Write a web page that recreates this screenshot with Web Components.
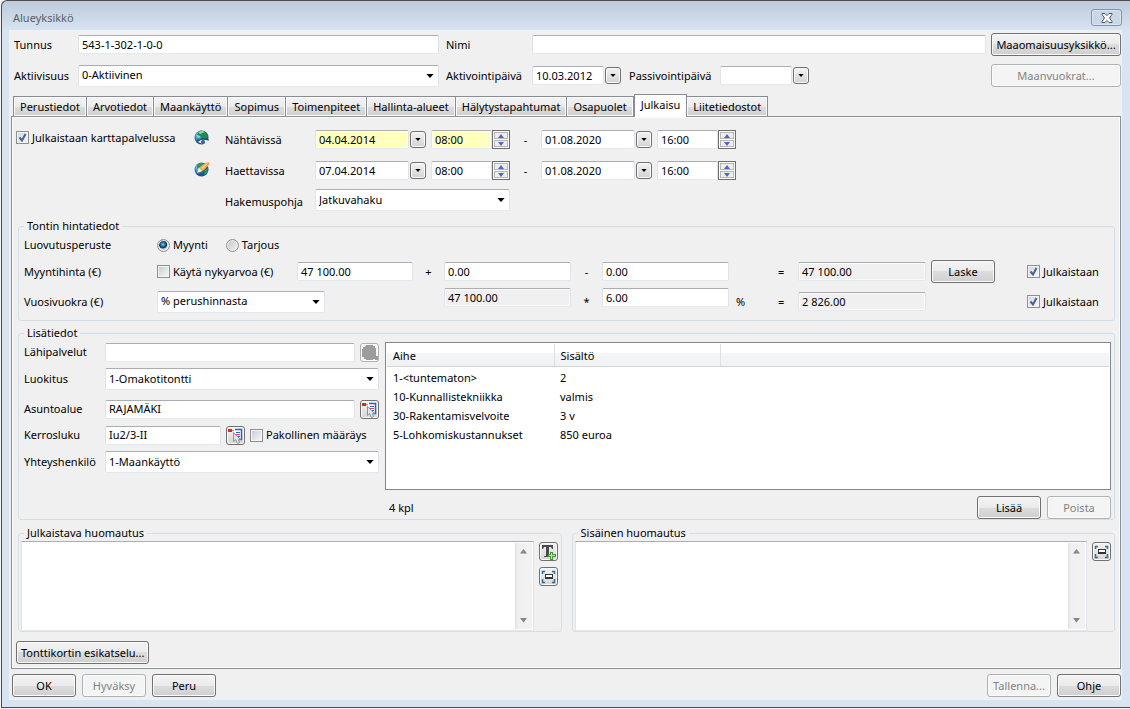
<!DOCTYPE html>
<html lang="fi">
<head>
<meta charset="utf-8">
<meta name="viewport" content="width=device-width, initial-scale=1">
<title>Alueyksikkö</title>
<style>
html, body { margin: 0; }
body {
  min-height: 100vh;
  display: flex;
  background: #f4f4f4;
  font: 11px/14px "Noto Sans", "Open Sans", sans-serif;
  color: #000;
}
app-window { flex: 1; }
</style>
</head>
<body>
<app-window heading="Alueyksikkö">
  <unit-header></unit-header>
  <unit-tabs selected="Julkaisu">
    <publish-times></publish-times>
    <price-info></price-info>
    <extra-info></extra-info>
    <unit-notes></unit-notes>
  </unit-tabs>
  <unit-footer></unit-footer>
</app-window>

<script>
const arrow = (c, w = 9, h = 5) => `url("data:image/svg+xml,%3Csvg xmlns='http://www.w3.org/2000/svg' width='${w}' height='${h}' viewBox='0 0 9 5'%3E%3Cpath d='M0 0h9L4.5 5z' fill='%23${c}'/%3E%3C/svg%3E")`;
const tick = `url("data:image/svg+xml,%3Csvg xmlns='http://www.w3.org/2000/svg' width='11' height='11'%3E%3Cpath d='M2.5 5.5l2.5 3L8.500 2' fill='none' stroke='%234b5f9b' stroke-width='2'/%3E%3C/svg%3E")`;

/* Styles for native controls, adopted by every component */
const base = `
*, *::before { box-sizing: border-box; }
:host { display: block; }
:host([hidden]) { display: none; }
input, select, button, textarea { font: inherit; color: inherit; margin: 0; border-radius: 2px; }
label, span { white-space: nowrap; }
input[type=text], textarea, select {
  border: 1px solid; border-color: #abadb3 #e2e3ea #e3e9ef #e2e3ea;
  background-color: #fff; min-width: 0; width: 100%; outline: 0;
}
input[type=text] { height: 19px; padding: 0 3px 1px; }
input[readonly] { background-color: #f0f0f0; box-shadow: inset 0 0 0 1px #fafafa; }
select {
  appearance: none; height: 22px; padding: 0 20px 1px 3px;
  background-image: ${arrow('000', 8, 4)}; background-repeat: no-repeat; background-position: right 4px center;
}
button {
  height: 23px; min-width: 64px; padding: 0 4px; border: 1px solid #707070; border-radius: 3px;
  background: linear-gradient(#f3f3f3, #ebebeb 50%, #dddddd 50%, #cfcfcf);
  box-shadow: inset 0 0 0 1px #fbfbfb; white-space: nowrap;
}
button:disabled { border-color: #adb2b5; background: #f4f4f4; color: #838383; }
input[type=checkbox], input[type=radio] {
  appearance: none; flex: none; width: 13px; height: 13px; border: 1px solid #8e8f8f; border-radius: 0;
  background: linear-gradient(135deg, #c9ced4, #f6f6f6) center / 9px 9px no-repeat #f4f4f4;
}
input[type=checkbox]:checked { background: ${tick} center no-repeat, linear-gradient(135deg, #d5d9de, #f6f6f6) center / 9px 9px no-repeat #f4f4f4; }
input[type=radio] { border-radius: 50%; background: linear-gradient(135deg, #bfc4c9, #f6f6f6) center / 100% no-repeat; box-shadow: inset 0 0 0 1px #f4f4f4; }
input[type=radio]:checked { background: radial-gradient(circle at 45% 40%, #7cd3f7 0, #1c6a97 25%, #0d2f4f 42%, #d0d5d9 50%, #e8eaec 100%); }
.check { display: inline-flex; align-items: center; gap: 3px; }
`;

function define(name, render) {
  customElements.define(name, class extends HTMLElement {
    constructor() {
      super();
      this.attachShadow({ mode: 'open' });
    }
    connectedCallback() {
      const t = document.createElement('template');
      t.innerHTML = `<style>${base}</style>` + render(this);
      this.shadowRoot.replaceChildren(t.content.cloneNode(true));
    }
  });
}
const attr = (el, n) => el.getAttribute(n) || '';

define('app-window', el => `
<style>
:host { display: flex; flex-direction: column; margin: 0 0 1px 1px; padding: 0 8px 7px 7px;
  border: solid #4a4a4f; border-width: 1px 0 1px 1px; border-top-left-radius: 6px;
  background: linear-gradient(#bdcbdb, #d8e4f1 30px) #d7e4f2; }
header { height: 29px; display: flex; align-items: center; justify-content: space-between; padding: 4px 0 0 4px; color: #5a5f66; }
h1 { margin: 0; font: inherit; }
header button { width: 31px; min-width: 0; height: 17px; padding: 0; border-color: #8592ad; background: #c9d7e6; box-shadow: inset 0 0 0 1px #dbe5f0; display: grid; place-items: center; }
main { flex: 1; display: flex; flex-direction: column; background: #f0f0f0; padding: 3px 1px 3px 2px; }
</style>
<header><h1>${attr(el, 'heading')}</h1>
<button aria-label="Sulje"><svg width="12" height="10" viewBox="0 0 12 10"><path d="M1 .5h3l2 2 2-2h3v1L8.500 5 11 8.500v1H8l-2-2-2 2H1v-1L3.500 5 1 1.500z" fill="#fff" stroke="#4c535f"/></svg></button></header>
<main><slot></slot></main>`);

define('date-field', el => `
<style>
:host { display: flex; align-items: center; gap: 1px; }
label { width: 85px; } label.wide { width: 90px; } label:empty { display: none; }
input[type=text] { flex: 1; }
:host([marked]) input { background-color: #ffffbe; box-shadow: inset 0 0 0 1px #fff; }
button { width: 16px; min-width: 0; height: 17px; padding: 0; background: ${arrow('000', 6, 3)} center no-repeat, linear-gradient(#f3f3f3, #d2d2d2); }
</style>
<label for="d" class="${attr(el, 'size')}">${attr(el, 'label')}</label>
<input type="text" id="d" value="${attr(el, 'value')}" aria-label="${attr(el, 'label') || attr(el, 'name')}">
<button aria-label="Avaa kalenteri"></button>`);

define('time-field', el => `
<style>
:host { display: flex; }
:host([marked]) input { background-color: #ffffbe; box-shadow: inset 0 0 0 1px #fff; }
div { display: grid; gap: 1px; width: 18px; height: 19px; padding: 1px; border: 1px solid #6e6e6e; background: #fff; flex: none; }
button { min-width: 0; height: 7px; padding: 0; border: 1px solid #b5b5b5; border-radius: 0; box-shadow: none; background: #eee; display: grid; place-items: center; }
svg { display: block; }
</style>
<input type="text" value="${attr(el, 'value')}" aria-label="${attr(el, 'name')}">
<div><button aria-label="Lisää"><svg width="6" height="4"><path d="M0 4h6L3 0z" fill="#4f68c0"/></svg></button><button aria-label="Vähennä"><svg width="6" height="4"><path d="M0 0h6L3 4z" fill="#4f68c0"/></svg></button></div>`);

const glyphs = {
  search: `<svg width="17" height="17"><path d="M5 1h7v1h2v2h1v8h2v4h-3v-1h-2v1H5v-1H3v-2H1V5h1V3h2z" fill="#9c9c9c"/></svg>`,
  pick: `<svg width="17" height="17"><path d="M1 2h4v3H1z" fill="#e8202c"/><path d="M5 3h2v1H5z" fill="#999"/><path d="M7 2h8v10H7z" fill="#fff"/><path d="M8 2.500h6.500v10H12" fill="none" stroke="#2b62c4" stroke-width="1.500"/><path d="M9 5h4v1H9zM10 9h3v1h-3z" fill="#2b62c4"/><path d="M9 7h4v1H9z" fill="#e04050"/><path d="M6.500 5.500v9l2-2 2 4 2-1-1-3h2z" fill="#dfe3ea" stroke="#8b93a5"/></svg>`,
  text: `<svg width="17" height="17"><path d="M2 2h11v4h-1l-1-2H9v9h2v1H4v-1h2V4H4L3 6H2z" fill="#4b4b4b"/><path d="M10 9h3v2h3v3h-3v3h-3v-3H8v-3h2z" fill="#3f9a3a"/><path d="M11 10h1v2h3v1h-3v3h-1v-3H9v-1h2z" fill="#a4f58f"/></svg>`,
  expand: `<svg width="17" height="17"><path d="M2.500 6V3.500H5M12 3.500h2.500V6M14.500 11v3.500H12M5 14.500H2.500V11" fill="none" stroke="#2f6b9d" stroke-width="1.500"/><path d="M5 6h8v5H5z" fill="#333"/><path d="M6 7h6v2H6z" fill="#fff"/></svg>`
};
define('icon-button', el => `
<style>
button { display: grid; place-items: center; width: 19px; min-width: 0; height: 19px; padding: 0; background: linear-gradient(#f3f3f3, #d6d6d6); }
</style>
<button aria-label="${attr(el, 'name')}" ${el.hasAttribute('disabled') ? 'disabled' : ''}>${glyphs[attr(el, 'icon')]}</button>`);

define('group-box', el => `
<style>
fieldset { margin: 0; min-width: 0; padding: 0 3px 0 5px; border: 1px solid #d5dfe8; border-radius: 3px; }
:host([tight]) fieldset { padding: 1px 3px 0 2px; }
legend { padding: 0 3px; }
:host([tight]) legend { margin-left: 3px; }
</style>
<fieldset><legend>${attr(el, 'heading')}</legend><slot></slot></fieldset>`);

define('unit-header', () => `
<style>
:host { display: grid; grid-template-columns: 64px minmax(0, 361fr) 7px 86px minmax(0, 454fr) 5px 130px; padding-left: 3px; row-gap: 8px; align-items: center; }
button { width: 100%; }
.nimi { grid-column: 5; }
.dates { grid-column: 4 / 6; display: flex; gap: 8px; }
date-field:first-child { width: 175px; } date-field:last-child { width: 180px; }
.last { grid-column: 7; } .n { grid-column: 4; }
</style>
<label for="tunnus">Tunnus</label><input type="text" id="tunnus" value="543-1-302-1-0-0">
<label class="n" for="nimi">Nimi</label><input class="nimi" type="text" id="nimi"><button class="last">Maaomaisuusyksikkö...</button>
<label for="akt">Aktiivisuus</label><select id="akt"><option>0-Aktiivinen</option></select>
<div class="dates"><date-field label="Aktivointipäivä" value="10.03.2012"></date-field><date-field size="wide" label="Passivointipäivä"></date-field></div>
<button class="last" disabled>Maanvuokrat...</button>`);

const tabNames = ['Perustiedot', 'Arvotiedot', 'Maankäyttö', 'Sopimus', 'Toimenpiteet', 'Hallinta-alueet', 'Hälytystapahtumat', 'Osapuolet', 'Julkaisu', 'Liitetiedostot'];
define('unit-tabs', el => `
<style>
:host { flex: 1; display: flex; flex-direction: column; margin-top: 7px; }
nav { display: flex; align-items: flex-end; padding-left: 2px; }
nav button { min-width: 0; height: 20px; padding: 0 6px; border: 1px solid #898c95; border-width: 1px 1px 0 0; border-radius: 0; }
nav button:first-child { border-left-width: 1px; }
nav button[aria-selected=true] { height: 23px; padding-bottom: 2px; margin-bottom: -1px; border-left-width: 1px; background: #fff; position: relative; }
section { flex: 1; border: 1px solid #8a9095; box-shadow: inset 0 0 0 1px #fbfbfb; padding: 9px 5px 3px 4px; display: flex; flex-direction: column; }
section > button { align-self: flex-start; margin-top: 9px; }
</style>
<nav role="tablist">${tabNames.map(t => `<button role="tab" aria-selected="${t === attr(el, 'selected')}">${t}</button>`).join('')}</nav>
<section role="tabpanel"><slot></slot><button>Tonttikortin esikatselu...</button></section>`);

define('publish-times', () => `
<style>
:host { display: grid; grid-template-columns: 178px 31px 90px 1fr; row-gap: 4px; align-items: center; margin-bottom: 4px; }
.row { display: flex; align-items: center; height: 27px; gap: 5px; }
.row span { width: 21px; text-align: center; }
date-field { width: 111px; } time-field { width: 79px; }
label[for=base], .lab { grid-column: 3; }
.ic { grid-column: 2; } .row, select { grid-column: 4; }
select { width: 195px; margin: 1px 0 4px; }
.check, svg { display: flex; margin-bottom: 4px; }
</style>
<label class="check"><input type="checkbox" checked>Julkaistaan karttapalvelussa</label>
<svg class="ic" width="16" height="16"><defs><radialGradient id="g" cx=".3" cy=".35"><stop offset="0" stop-color="#c5f2f8"/><stop offset=".5" stop-color="#3a95c2"/><stop offset="1" stop-color="#1c4f86"/></radialGradient></defs><circle cx="7.500" cy="7.500" r="7" fill="url(#g)"/><path d="M5 1q6-1 9 5l-1 3-5 0-2-3-3-1z" fill="#1f8a55"/><path d="M4 2q4-2 7 0l-5 2z" fill="#8fd6a0"/><path d="M4 12q4-4 11-1l-1 2q-5 2-10-1z" fill="#eef1f5"/><path d="M3 11q5-4 12-1" fill="none" stroke="#24405e" stroke-width="1"/><circle cx="9" cy="12" r="2" fill="#2f5f96"/></svg>
<span class="lab">Nähtävissä</span>
<div class="row"><date-field marked name="Nähtävissä alkaen" value="04.04.2014"></date-field><time-field marked name="Nähtävissä alkaen klo" value="08:00"></time-field><span>-</span><date-field name="Nähtävissä asti" value="01.08.2020"></date-field><time-field name="Nähtävissä asti klo" value="16:00"></time-field></div>
<svg class="ic" width="16" height="16"><defs><radialGradient id="h" cx=".3" cy=".35"><stop offset="0" stop-color="#c5f2f8"/><stop offset=".5" stop-color="#3a9cc8"/><stop offset="1" stop-color="#1b5590"/></radialGradient></defs><circle cx="7.500" cy="8.500" r="7" fill="url(#h)"/><path d="M3 4l3-2h3l-2 4-4 2zM11 9l3-2-1 5-3 2z" fill="#2f9a55"/><path d="M4 10l2-4 5-4 4-1v3l-5 5-4 2z" fill="#f0a63c"/><path d="M7 7l5-4 2-1-5 6z" fill="#fbd48a"/><path d="M3 12l2-5 3 3z" fill="#fff3d6"/></svg>
<span class="lab">Haettavissa</span>
<div class="row"><date-field name="Haettavissa alkaen" value="07.04.2014"></date-field><time-field name="Haettavissa alkaen klo" value="08:00"></time-field><span>-</span><date-field name="Haettavissa asti" value="01.08.2020"></date-field><time-field name="Haettavissa asti klo" value="16:00"></time-field></div>
<label for="base">Hakemuspohja</label><select id="base"><option>Jatkuvahaku</option></select>`);

define('price-info', () => `
<style>
:host { margin-left: 2px; }
.grid { display: grid; grid-template-columns: 133px 140px minmax(0, 116fr) 31px minmax(0, 127fr) 31px minmax(0, 127fr) 23px 46px minmax(0, 128fr) 5px 64px 32px 84px; grid-template-rows: 24px 29px 31px; align-items: center; padding-bottom: 3px; }
.radios { grid-column: 2 / -1; display: flex; gap: 18px; }
.grid > :nth-child(3) { grid-column: 1; }
.op { text-align: center; } .eq { padding-left: 26px; grid-column: 9; }
.total { grid-column: 10; } .top { align-self: start; margin-top: 2px; }
button { grid-column: 12; } .pub { grid-column: 14; }
.method { grid-column: 2 / 4; width: 168px; } .fee { grid-column: 5; }
</style>
<group-box heading="Tontin hintatiedot"><div class="grid">
<span>Luovutusperuste</span>
<div class="radios"><label class="check"><input type="radio" name="r" checked>Myynti</label><label class="check"><input type="radio" name="r">Tarjous</label></div>
<span>Myyntihinta (€)</span><label class="check"><input type="checkbox">Käytä nykyarvoa (€)</label>
<input type="text" aria-label="Myyntihinta" value="47 100.00"><span class="op">+</span><input type="text" aria-label="Lisäys" value="0.00"><span class="op">-</span><input type="text" aria-label="Vähennys" value="0.00"><span class="eq">=</span><input class="total" type="text" readonly aria-label="Myyntihinta yhteensä" value="47 100.00"><button>Laske</button><label class="check pub"><input type="checkbox" checked>Julkaistaan</label>
<label for="method">Vuosivuokra (€)</label><select id="method" class="method"><option>% perushinnasta</option></select>
<input class="fee top" type="text" readonly aria-label="Perushinta" value="47 100.00"><span class="op">*</span><input class="top" type="text" aria-label="Prosentti" value="6.00"><span class="op">%</span><span class="eq">=</span><input class="total" type="text" readonly aria-label="Vuosivuokra yhteensä" value="2 826.00"><label class="check pub"><input type="checkbox" checked>Julkaistaan</label>
</div></group-box>`);

define('extra-info', () => `
<style>
:host { margin: 5px 0 0 2px; }
.cols { display: grid; grid-template-columns: 355px minmax(0, 1fr); gap: 6px; padding-top: 2px; }
.form { display: grid; grid-template-columns: 81px minmax(0, 1fr); grid-template-rows: 20px 34px 26px 26px 28px; align-items: center; }
.line { display: flex; align-items: center; gap: 5px; }
.short { width: 116px !important; }
.list { height: 148px; border: 1px solid #828790; background: #fff; padding: 1px; }
table { width: 100%; border-collapse: collapse; table-layout: fixed; }
th { height: 22px; padding: 2px 6px 0; text-align: left; font-weight: normal; background: linear-gradient(#fff 40%, #f5f6f8 40%, #f0f1f3); border-bottom: 1px solid #d5d5d5; border-right: 1px solid #dcdfe3; }
th:last-child { border-right: 0; }
td { height: 19px; padding: 0 6px; white-space: nowrap; }
tbody::before { content: ""; display: block; height: 2px; }
.foot { display: flex; align-items: center; gap: 6px; margin-top: 6px; }
.foot span { flex: 1; padding-left: 4px; }
</style>
<group-box heading="Lisätiedot"><div class="cols"><div class="form">
<label for="a">Lähipalvelut</label><div class="line"><input type="text" id="a"><icon-button icon="search" name="Hae lähipalvelut" disabled></icon-button></div>
<label for="b">Luokitus</label><select id="b"><option>1-Omakotitontti</option></select>
<label for="c">Asuntoalue</label><div class="line"><input type="text" id="c" value="RAJAMÄKI"><icon-button icon="pick" name="Valitse asuntoalue"></icon-button></div>
<label for="d">Kerrosluku</label><div class="line"><input class="short" type="text" id="d" value="Iu2/3-II"><icon-button icon="pick" name="Valitse kerrosluku"></icon-button><label class="check"><input type="checkbox">Pakollinen määräys</label></div>
<label for="e">Yhteyshenkilö</label><select id="e"><option>1-Maankäyttö</option></select>
</div><div>
<div class="list"><table><colgroup><col style="width:167px"><col style="width:166px"><col></colgroup><thead><tr><th>Aihe</th><th>Sisältö</th><th></th></tr></thead>
<tbody><tr><td>1-&lt;tuntematon&gt;</td><td>2</td></tr><tr><td>10-Kunnallistekniikka</td><td>valmis</td></tr><tr><td>30-Rakentamisvelvoite</td><td>3 v</td></tr><tr><td>5-Lohkomiskustannukset</td><td>850 euroa</td></tr></tbody></table></div>
<div class="foot"><span>4 kpl</span><button>Lisää</button><button disabled>Poista</button></div>
</div></div></group-box>`);

define('note-area', el => `
<style>
:host { display: flex; gap: 5px; }
.box { flex: 1; display: flex; height: 90px; border: 1px solid; border-color: #abadb3 #e2e3ea #e3e9ef; background: #fff; padding: 1px; }
textarea { flex: 1; border: 0; resize: none; overflow: hidden; padding: 2px; }
.bar { width: 17px; display: flex; flex-direction: column; justify-content: space-between; align-items: center; padding: 6px 0; background: linear-gradient(90deg, #e3e3e3, #f0f0f0 20%, #f2f2f2); }
.tools { display: flex; flex-direction: column; gap: 6px; padding-top: 1px; }
</style>
<div class="box"><textarea aria-label="${attr(el, 'name')}"></textarea><div class="bar"><svg width="7" height="5"><path d="M0 4.500h7L3.500 0z" fill="#858585"/></svg><svg width="7" height="5"><path d="M0 0h7L3.500 4.500z" fill="#858585"/></svg></div></div>
<div class="tools"><slot></slot></div>`);

define('unit-notes', () => `
<style>
:host { display: grid; grid-template-columns: 1fr 1fr; gap: 10px; margin: 6px 0 0 2px; }
</style>
<group-box tight heading="Julkaistava huomautus"><note-area name="Julkaistava huomautus"><icon-button icon="text" name="Lisää teksti"></icon-button><icon-button icon="expand" name="Suurenna"></icon-button></note-area></group-box>
<group-box tight heading="Sisäinen huomautus"><note-area name="Sisäinen huomautus"><icon-button icon="expand" name="Suurenna"></icon-button></note-area></group-box>`);

define('unit-footer', () => `
<style>
:host { display: flex; gap: 6px; padding: 5px 0 0 1px; }
i { flex: 1; }
</style>
<button>OK</button><button disabled>Hyväksy</button><button>Peru</button><i></i><button disabled>Tallenna...</button><button>Ohje</button>`);
</script>
</body>
</html>
